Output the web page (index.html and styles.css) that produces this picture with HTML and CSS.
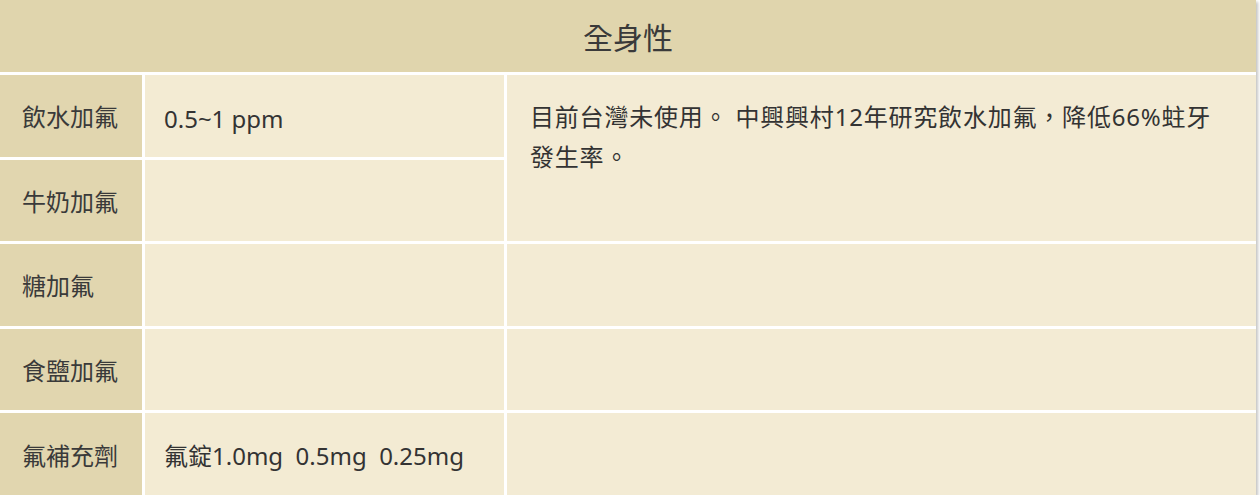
FILE: index.html
```html
<!DOCTYPE html>
<html lang="zh-Hant">
<head>
<meta charset="utf-8">
<title>全身性</title>
<link rel="stylesheet" href="styles.css">
</head>
<body>
<div class="sheet">
  <div class="head">全身性</div>

  <div class="label">飲水加氟</div>
  <div class="value first">0.5~1 ppm</div>
  <div class="note span2">目前台灣未使用。 中興興村12年研究飲水加氟，降低66%蛀牙發生率。</div>

  <div class="label">牛奶加氟</div>
  <div class="value"></div>

  <div class="label">糖加氟</div>
  <div class="value"></div>
  <div class="note"></div>

  <div class="label">食鹽加氟</div>
  <div class="value"></div>
  <div class="note"></div>

  <div class="label">氟補充劑</div>
  <div class="value">氟錠1.0mg&nbsp; 0.5mg&nbsp; 0.25mg</div>
  <div class="note"></div>
</div>
</body>
</html>
```

FILE: styles.css
```css
html, body {
  margin: 0;
  padding: 0;
  background: #ffffff;
}

.sheet {
  width: 1256px;
  height: 495px;
  display: grid;
  grid-template-columns: 142px 359px 1fr;
  grid-template-rows: 72px repeat(5, 1fr);
  gap: 3px;
  background: #ffffff;
  box-shadow: 2px 2px 3px #c4c4c4;
  font-family: "Noto Sans", "Noto Sans CJK TC", sans-serif;
  color: #333333;
}

.head {
  grid-column: 1 / -1;
  background: #e0d5ad;
  display: flex;
  align-items: center;
  justify-content: center;
  font-size: 30px;
  color: #3a3a3a;
}

.label {
  background: #e1d6af;
  display: flex;
  align-items: center;
  padding-left: 22px;
  font-size: 24px;
  color: #3a3a3a;
}

.value {
  background: #f3ebd3;
  display: flex;
  align-items: center;
  padding-left: 19px;
  font-size: 24px;
}

.value.first {
  padding-top: 6px;
}

.note {
  background: #f3ebd4;
  padding: 22px 40px 0 23px;
  font-size: 24px;
  line-height: 40px;
  letter-spacing: 0.8px;
}

.span2 {
  grid-row: span 2;
}
```
